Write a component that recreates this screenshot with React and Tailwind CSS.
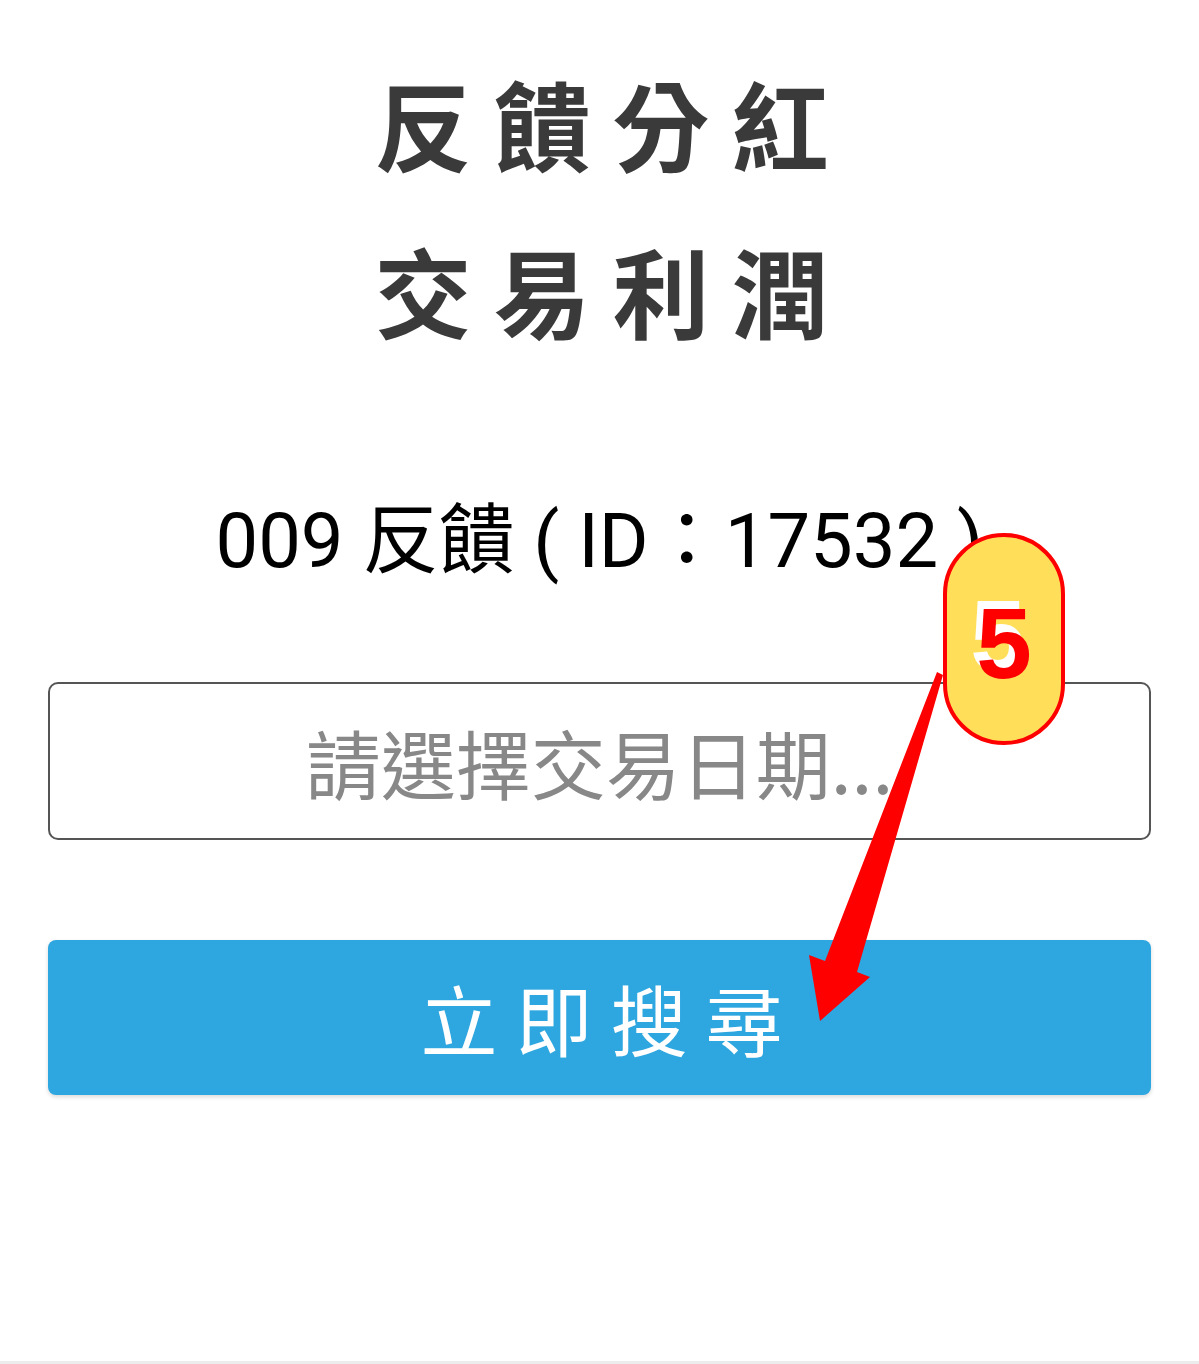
import React from 'react'

const cjk = { fontFamily: '"Noto Sans CJK TC", "Noto Sans", sans-serif' }

const StepBadge = () => (
  <div className="absolute left-[943px] top-[533px] w-[122px] h-[212px] rounded-full border-[4px] border-[#ff0000] bg-[#ffde59] flex items-center justify-center">
    <span
      className="text-[100px] font-bold leading-none text-[#ff0000] [text-shadow:-6px_-8px_0_#ffffff] mt-[8px]"
      style={{ fontFamily: '"Liberation Sans", Arial, sans-serif' }}
    >
      5
    </span>
  </div>
)

const Arrow = () => (
  <svg className="absolute left-0 top-0 pointer-events-none" width="1199" height="1364" viewBox="0 0 1199 1364">
    <polygon
      points="937,672 943,675 857,972 870,977 820,1021 809,955 825,961"
      fill="#ff0000"
    />
  </svg>
)

export default function App() {
  return (
    <div className="relative w-full h-[1364px] bg-white border-b-[3px] border-[#ececec] overflow-hidden" style={cjk}>
      <div className="px-[48px] pt-[38px]">
        {/* Title */}
        <div className="text-center text-[97px] leading-[167px] font-bold text-[#3a3a3a] tracking-[22px] pl-[26px]">
          <div>反饋分紅</div>
          <div>交易利潤</div>
        </div>

        {/* Account line */}
        <div
          className="mt-[124px] text-center text-[76px] leading-[90px] text-black"
          style={{ fontFamily: 'Roboto, "Noto Sans CJK TC", sans-serif' }}
        >
          009 反饋 ( ID：17532 )
        </div>

        {/* Date input */}
        <input
          readOnly
          placeholder="請選擇交易日期..."
          className="mt-[96px] block w-full h-[158px] rounded-[10px] border-2 border-[#555555] bg-white text-center text-[75px] text-[#444] placeholder:text-[#888888] outline-none"
          style={cjk}
        />

        {/* Search button */}
        <button className="mt-[100px] block w-full h-[155px] rounded-[8px] bg-[#2ea6df] shadow-[0_2px_4px_rgba(0,0,0,0.15)] text-white text-[77px] font-normal tracking-[18px] pl-[22px]">
          立即搜尋
        </button>
      </div>

      <Arrow />
      <StepBadge />
    </div>
  )
}
